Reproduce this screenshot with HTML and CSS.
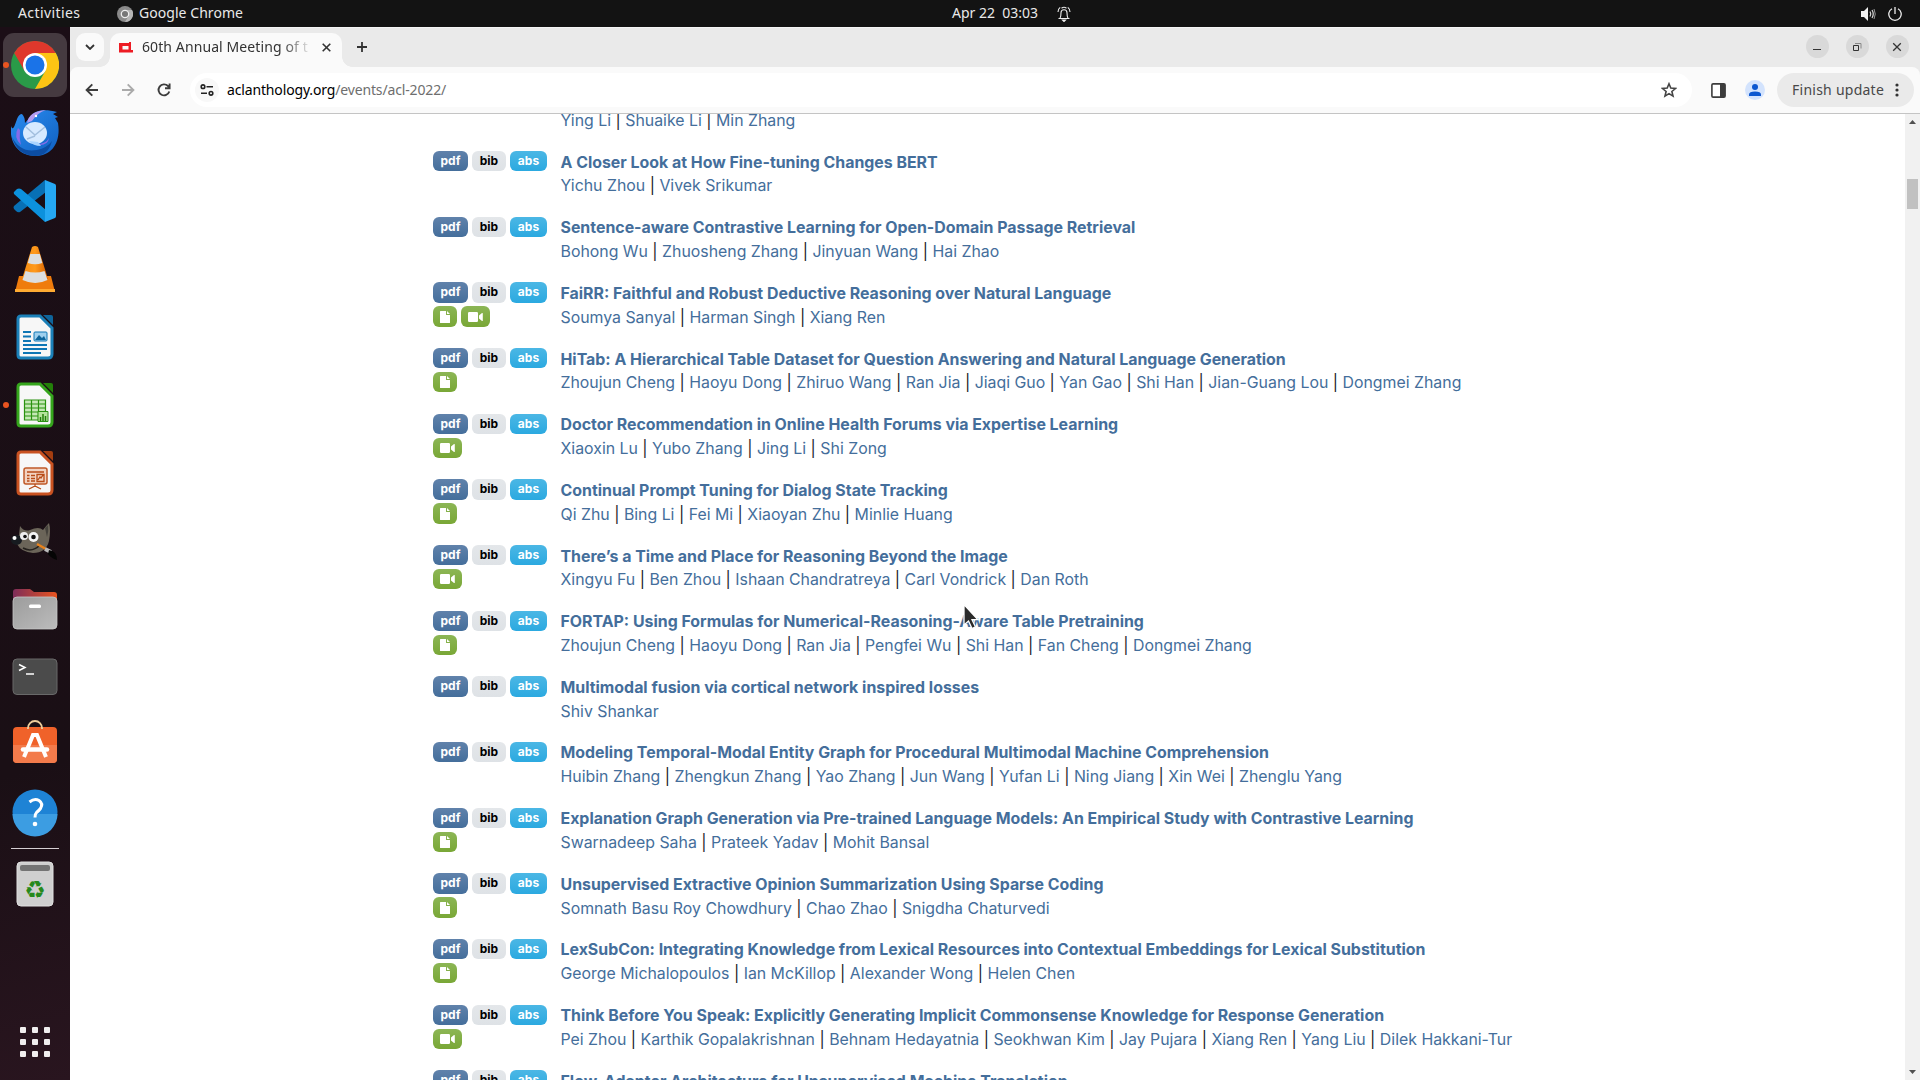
FILE: index.html
```html
<!DOCTYPE html>
<html lang="en">
<head>
    <meta charset="UTF-8">
    <title>60th Annual Meeting of the Association for Computational Linguistics</title>
    <link rel="stylesheet" href="styles.css">
</head>
<body>
<svg class="defs">
    <symbol id="doc" viewBox="0 0 10 12"><path fill="#fff" d="M0 .6Q0 0 .6 0H6v3.4q0 .6.6.6H10v7.4q0 .6-.6.6H.6Q0 12 0 11.4zM7 0l3 3H7z"/></symbol>
    <symbol id="video" viewBox="0 0 15 10"><path fill="#fff" d="M0 1.2Q0 0 1.2 0h7.6Q10 0 10 1.2v7.6Q10 10 8.8 10H1.2Q0 10 0 8.8zM11 3.4 14 1q.8-.4.8.5v7q0 .9-.8.5l-3-2.400z"/></symbol>
    <linearGradient id="blueball" x1="0" y1="0" x2="1" y2="1"><stop offset="0" stop-color="#2b8df0"/><stop offset="1" stop-color="#0f5fc0"/></linearGradient>
    <linearGradient id="grey" x1="0" y1="0" x2="1" y2="1"><stop offset="0" stop-color="#9c9c9c"/><stop offset="1" stop-color="#bcbcbc"/></linearGradient>
    <linearGradient id="folder"><stop offset="0" stop-color="#7d2d59"/><stop offset="1" stop-color="#e95420"/></linearGradient>
    <linearGradient id="cone"><stop offset="0" stop-color="#f58a10"/><stop offset=".5" stop-color="#ff9a1c"/><stop offset="1" stop-color="#d65f00"/></linearGradient>
</svg>

<header class="topbar">
    <span class="activities">Activities</span>
    <svg class="app-icon" width="16" height="16" viewBox="0 0 16 16"><circle cx="8" cy="8" r="8" fill="#8a8a8a"/><path d="M8 4h7A8 8 0 0 1 8 16l3.500-6z" fill="#b5b5b5"/><circle cx="8" cy="8" r="3.700" fill="#777" stroke="#eee" stroke-width="1.300"/></svg>
    <span class="app-name">Google Chrome</span>
    <div class="clock">
        <span>Apr 22&nbsp; 03:03</span>
        <svg width="14" height="16" viewBox="0 0 14 16" fill="none" stroke="#eee" stroke-width="1.100"><path d="M1.500 12.500h11M3 12.300c1-1.300 1-3 1-5.500a3 3 0 0 1 6 0c0 2.500 0 4.200 1 5.500M1 6c0-2 .8-3.600 2.200-4.600M13 6c0-2-.8-3.600-2.200-4.600M4.500 2.300a4 4 0 0 1 5 0"/><path d="M5.500 14h3l-1.500 1.500z" fill="#eee"/></svg>
    </div>
    <div class="tray">
        <svg width="16" height="14" viewBox="0 0 16 14"><path d="M0 4h3l4-4v14l-4-4H0z" fill="#f2f2f2"/><path d="M9 4.500q1.600 2.500 0 5M11 3q2.500 4 0 8" fill="none" stroke="#ddd" stroke-width="1.200"/><path d="M13 2q2.500 5 0 10" fill="none" stroke="#999"/></svg>
        <svg width="14" height="14" viewBox="0 0 14 14" fill="none" stroke="#eee" stroke-width="1.300"><path d="M7 0v7M4 1.700a6.200 6.200 0 1 0 6 0"/></svg>
    </div>
</header>

<div class="desktop">
    <nav class="dock">
        <div class="dock-item active running">
            <svg width="48" height="48" viewBox="0 0 48 48"><circle cx="24" cy="24" r="24" fill="#2a9a48"/><path d="M3.200 12A24 24 0 0 1 44.800 12H24L13.600 30z" fill="#df382c"/><path d="M24 12h20.800A24 24 0 0 1 24 48l10.400-18z" fill="#fdc414"/><circle cx="24" cy="24" r="12" fill="#fff"/><circle cx="24" cy="24" r="9.500" fill="#1a73e8"/></svg>
        </div>
        <div class="dock-item">
            <svg width="48" height="48" viewBox="0 0 48 48"><path d="M0 17C2 23 4 16 6 10q2-5 5-5 3 3 3 9l6-7C24 1 34 0 46 3l-4 2 5 3-3 1 3 5C50 32 42 47 24 47 8 47-2 34 0 17z" fill="url(#blueball)"/><path d="M1 28q8 16 25 13 10-2 15-9-4 15-17 15Q6 46 1 28z" fill="#0c4da3"/><path d="M16 14q2-12 19-13-9 3-14 11z" fill="#b49cf0"/><path d="M7 19q-5 9 3 17-2-7-1-15zM26 35q9 0 12-6-1 7-9 7z" fill="#866ce8"/><ellipse cx="24" cy="24" rx="12" ry="11" fill="#d7eaff"/><path d="M18 32q4 5 12 5l-3-4z" fill="#a9d4ff"/><path d="M15 18l9 8 10-8M24 27l-8 3" fill="none" stroke="#a3bfde" stroke-width="1.500"/><circle cx="25" cy="7" r="1.200" fill="#fff"/></svg>
        </div>
        <div class="dock-item">
            <svg width="44" height="44" viewBox="0 0 44 44"><path d="M32 1 33 13 7 33q-2 1-4-1l-2-2q-1-2 0-3z" fill="#0870b5"/><path d="M1 15q-1-2 1-3l2-2q2-1 4 0l25 21-1 12z" fill="#0c91dd"/><path d="M32 1l10 4q1 .7 1 2v30q0 1.500-1 2l-10 4z" fill="#25a8f3"/></svg>
        </div>
        <div class="dock-item">
            <svg width="42" height="48" viewBox="0 0 42 48"><path d="M5 31h32l4 16H1z" fill="#ef7c0c"/><path d="M1 44h40v3H1z" fill="#ffab32"/><path d="M18 2q3-2 6 0l10 32q-13 8-26 0z" fill="url(#cone)"/><path d="M16.300 9h9.500l2.500 9q-7 2.500-14.500 0zM11.500 26q10 3 19 0l3 9q-12 6-25 0z" fill="#dcdedf"/></svg>
        </div>
        <div class="dock-item">
            <svg width="38" height="46" viewBox="0 0 38 46"><path d="M5 2h19l12 12v26q0 4-4 4H5q-3 0-3-3V5q0-3 3-3z" fill="#f7f7f7" stroke="#1b80b8" stroke-width="3"/><path d="M27 1h8q2 0 2 2v8z" fill="#0e659b"/><path d="M7 18h8M7 22.500h8M7 27h8M7 31h24M7 35h24M7 39h18" stroke="#0e76b5" stroke-width="2"/><rect x="18" y="18" width="13" height="9" rx="1" fill="#9fd0ee" stroke="#0e76b5"/><path d="M19 26l4-5 3 3 2-2 2 4z" fill="#0e659b"/></svg>
        </div>
        <div class="dock-item running">
            <svg width="38" height="46" viewBox="0 0 38 46"><path d="M5 2h19l12 12v26q0 4-4 4H5q-3 0-3-3V5q0-3 3-3z" fill="#f7f7f7" stroke="#35a51c" stroke-width="3"/><path d="M27 1h8q2 0 2 2v8z" fill="#238009"/><path d="M8.500 18h21v20h-21zM8.500 22h21M8.500 26h21M8.500 30h21M8.500 34h21M15.500 18v20M22.500 18v20" fill="#c5e8b6" stroke="#2a9210" stroke-width="1.200"/><path d="M22 29.500h10v10H22z" fill="#b5e39b" stroke="#2a9210"/><path d="M24.500 39v-4M27 39v-7M29.500 39v-5" stroke="#238009" stroke-width="1.500"/></svg>
        </div>
        <div class="dock-item">
            <svg width="38" height="46" viewBox="0 0 38 46"><path d="M5 2h19l12 12v26q0 4-4 4H5q-3 0-3-3V5q0-3 3-3z" fill="#f7f7f7" stroke="#c95221" stroke-width="3"/><path d="M27 1h8q2 0 2 2v8z" fill="#a33d10"/><rect x="8" y="18" width="23" height="16" rx="2" fill="#f3d3c1" stroke="#c05a28" stroke-width="1.500"/><path d="M11 22h17M11 25.500h2.500M11 28.500h2.500M11 31h2.500M15 25.500h4M15 28.500h4M15 31h4" stroke="#b84b17" stroke-width="1.500"/><path d="M21 24.500h7v7h-7zM22 30l2-3 1 1 2-3M19 34v3M13 39l6-3 6 3" fill="none" stroke="#b84b17" stroke-width="1.300"/></svg>
        </div>
        <div class="dock-item">
            <svg width="48" height="48" viewBox="0 3 48 48"><path d="M9 12q4 6 10 4 9-4 13 0 3-4 6-7 2 7 0 18-3 12-16 12Q10 38 6 30 3 25 8 21z" fill="#6b6559"/><path d="M34 14l3-3q1 6-1 12z" fill="#45423c"/><ellipse cx="5.500" cy="26" rx="5.500" ry="5" fill="#171b20"/><circle cx="3.500" cy="24" r="2" fill="#fff"/><circle cx="13" cy="22" r="4" fill="#eee"/><circle cx="14" cy="22.500" r="1.800" fill="#111"/><circle cx="22.500" cy="23" r="5" fill="#f5f5f5"/><circle cx="22.500" cy="23" r="2.300" fill="#111"/><path d="M12 34q9 5 17-3" fill="none" stroke="#25221e" stroke-width="1.500"/><path d="M26 30l9 5" stroke="#e8821c" stroke-width="2.500"/><path d="M34 35l6 3" stroke="#bbb" stroke-width="4"/><path d="M38 36q8 1 8 10-6-2-9-6z" fill="#050505"/></svg>
        </div>
        <div class="dock-item">
            <svg width="46" height="42" viewBox="0 0 46 42"><path d="M1 4q0-3 3-3h14l4 3h20q3 0 3 3v14H1z" fill="url(#folder)"/><rect x="1" y="9" width="44" height="32" rx="4" fill="url(#grey)" stroke="#c7c7c7" stroke-width=".8"/><rect x="17" y="16.500" width="12" height="3.500" rx="1.500" fill="#fff"/></svg>
        </div>
        <div class="dock-item">
            <svg width="46" height="38" viewBox="0 0 46 38"><rect x="1" y="1" width="44" height="35.500" rx="4" fill="#4b4b4b" stroke="#696969"/><path d="M7 6.500l6 3-6 3" fill="none" stroke="#fff" stroke-width="1.500"/><path d="M14 16h8" stroke="#fff" stroke-width="1.500"/></svg>
        </div>
        <div class="dock-item">
            <svg width="46" height="50" viewBox="0 0 46 50"><rect x="1" y="7" width="44" height="36" rx="4" fill="#f0622a"/><path d="M1 25h44v14q0 4-4 4H5q-4 0-4-4z" fill="#f37b4b"/><path d="M16 9v-1a7 7 0 0 1 14 0v1" fill="none" stroke="#efce9c" stroke-width="1.800"/><path d="M12 37l9-22h4l9 22" fill="none" stroke="#fff" stroke-width="4"/><path d="M11 29.500h24" stroke="#fff" stroke-width="4.500" stroke-linecap="round"/></svg>
        </div>
        <div class="dock-item">
            <svg width="46" height="48" viewBox="0 0 46 48"><circle cx="23" cy="23" r="22.500" fill="#1e83d5"/><path d="M.5 25h45a22.500 22.500 0 0 1-45 0z" fill="#3c9de2"/><path d="M17.500 13q5-4 9.500-1.500 4.500 3 1.500 8-1.500 2-4 4-1.500 1.500-1.500 5" fill="none" stroke="#fff" stroke-width="3"/><circle cx="23" cy="35" r="2.300" fill="#fff"/></svg>
        </div>
        <div class="dock-line"></div>
        <div class="dock-item trash">
            <svg width="38" height="46" viewBox="0 0 38 46"><rect x="1" y="1" width="36" height="44" rx="4" fill="#cfcfcf" stroke="#e0e0e0"/><rect x="4" y="4" width="30" height="6" rx="2" fill="#747474"/><text x="19" y="37" class="recycle">♻</text></svg>
        </div>
        <div class="apps"><i></i><i></i><i></i><i></i><i></i><i></i><i></i><i></i><i></i></div>
    </nav>

    <main class="window">
        <div class="tabstrip">
            <div class="tab-search"><svg width="10" height="6" viewBox="0 0 10 6"><path d="M1 1l4 4 4-4" fill="none" stroke="#333" stroke-width="1.800"/></svg></div>
            <div class="tab">
                <svg width="14" height="11" viewBox="0 0 14 11"><path fill="#ed1c24" fill-rule="evenodd" d="M0 1h10V0h2v8h2v2.500H0zM3.500 4v3.500h6V4z"/></svg>
                <span class="tab-title">60th Annual Meeting of t</span>
                <svg width="9" height="9" viewBox="0 0 9 9"><path d="M.7.7l7.600 7.600M8.300.7.7 8.300" stroke="#333" stroke-width="1.600"/></svg>
            </div>
            <svg class="new-tab" width="12" height="12" viewBox="0 0 12 12"><path d="M6 1v10M1 6h10" stroke="#333" stroke-width="1.800"/></svg>
            <div class="win-buttons">
                <span><svg width="10" height="10" viewBox="0 0 10 10"><path d="M1 7.500h8" stroke="#333"/></svg></span>
                <span><svg width="10" height="10" viewBox="0 0 10 10" fill="none"><path d="M3 1.500h6v5" stroke="#888"/><path d="M1.500 3.500h5v5h-5z" stroke="#333"/></svg></span>
                <span><svg width="10" height="10" viewBox="0 0 10 10"><path d="M1.200 1.200l7.600 7.600M8.800 1.200 1.200 8.800" stroke="#333" stroke-width="1.300"/></svg></span>
            </div>
        </div>
        <div class="toolbar">
            <svg width="14" height="14" viewBox="0 0 14 14" fill="none" stroke="#3c3c3c" stroke-width="1.900"><path d="M13 7H2M7.300 1.300 1.600 7l5.700 5.700"/></svg>
            <svg width="14" height="14" viewBox="0 0 14 14" fill="none" stroke="#aaa" stroke-width="1.900"><path d="M1 7h11M6.700 1.300 12.400 7l-5.700 5.700"/></svg>
            <svg width="14" height="14" viewBox="0 0 14 14" fill="none" stroke="#3c3c3c" stroke-width="1.900"><path d="M12.300 8.500A5.500 5.500 0 1 1 11 3l1.500 1.500M12.600.5v4.700H8"/></svg>
            <div class="omnibox">
                <span class="site-info"><svg width="14" height="12" viewBox="0 0 14 12" fill="none" stroke="#222" stroke-width="1.600"><circle cx="3" cy="2.700" r="1.800"/><path d="M6.500 2.700H13M1 9.300h6"/><circle cx="11" cy="9.300" r="1.800"/></svg></span>
                <span class="url">aclanthology.org<em>/events/acl-2022/</em></span>
                <svg width="16" height="16" viewBox="0 0 16 16"><path d="M8 1.800l1.800 4.300 4.700.4-3.600 3 1.100 4.600L8 11.600l-4 2.500 1.100-4.600-3.600-3 4.700-.4z" fill="none" stroke="#444" stroke-width="1.600"/></svg>
            </div>
            <svg class="panel" width="15" height="15" viewBox="0 0 15 15"><rect x=".9" y=".9" width="13.200" height="13.200" rx="1.200" fill="#fff" stroke="#3c3c3c" stroke-width="1.600"/><path d="M9 1h5v13H9z" fill="#3c3c3c"/></svg>
            <svg class="avatar" width="20" height="20" viewBox="0 0 20 20"><circle cx="10" cy="10" r="10" fill="#d3e3fd"/><circle cx="10" cy="7" r="3" fill="#0b57d0"/><path d="M4 16v-1.500q0-3 6-3t6 3V16z" fill="#0b57d0"/></svg>
            <div class="update"><span>Finish update</span><svg width="4" height="14" viewBox="0 0 4 14" fill="#333"><circle cx="2" cy="2" r="1.600"/><circle cx="2" cy="7" r="1.600"/><circle cx="2" cy="12" r="1.600"/></svg></div>
        </div>

        <div class="page">
            <div class="papers">
                <div class="paper">
                    <div class="buttons"></div>
                    <div class="info"><b>&nbsp;</b><p><a>Ying Li</a> | <a>Shuaike Li</a> | <a>Min Zhang</a></p></div>
                </div>
                <div class="paper">
                    <div class="buttons"><span class="pdf">pdf</span><span class="bib">bib</span><span class="abs">abs</span></div>
                    <div class="info"><b>A Closer Look at How Fine-tuning Changes BERT</b><p><a>Yichu Zhou</a> | <a>Vivek Srikumar</a></p></div>
                </div>
                <div class="paper">
                    <div class="buttons"><span class="pdf">pdf</span><span class="bib">bib</span><span class="abs">abs</span></div>
                    <div class="info"><b>Sentence-aware Contrastive Learning for Open-Domain Passage Retrieval</b><p><a>Bohong Wu</a> | <a>Zhuosheng Zhang</a> | <a>Jinyuan Wang</a> | <a>Hai Zhao</a></p></div>
                </div>
                <div class="paper">
                    <div class="buttons"><span class="pdf">pdf</span><span class="bib">bib</span><span class="abs">abs</span><span class="att doc"><svg><use href="#doc"/></svg></span><span class="att video"><svg><use href="#video"/></svg></span></div>
                    <div class="info"><b>FaiRR: Faithful and Robust Deductive Reasoning over Natural Language</b><p><a>Soumya Sanyal</a> | <a>Harman Singh</a> | <a>Xiang Ren</a></p></div>
                </div>
                <div class="paper">
                    <div class="buttons"><span class="pdf">pdf</span><span class="bib">bib</span><span class="abs">abs</span><span class="att doc"><svg><use href="#doc"/></svg></span></div>
                    <div class="info"><b>HiTab: A Hierarchical Table Dataset for Question Answering and Natural Language Generation</b><p><a>Zhoujun Cheng</a> | <a>Haoyu Dong</a> | <a>Zhiruo Wang</a> | <a>Ran Jia</a> | <a>Jiaqi Guo</a> | <a>Yan Gao</a> | <a>Shi Han</a> | <a>Jian-Guang Lou</a> | <a>Dongmei Zhang</a></p></div>
                </div>
                <div class="paper">
                    <div class="buttons"><span class="pdf">pdf</span><span class="bib">bib</span><span class="abs">abs</span><span class="att video"><svg><use href="#video"/></svg></span></div>
                    <div class="info"><b>Doctor Recommendation in Online Health Forums via Expertise Learning</b><p><a>Xiaoxin Lu</a> | <a>Yubo Zhang</a> | <a>Jing Li</a> | <a>Shi Zong</a></p></div>
                </div>
                <div class="paper">
                    <div class="buttons"><span class="pdf">pdf</span><span class="bib">bib</span><span class="abs">abs</span><span class="att doc"><svg><use href="#doc"/></svg></span></div>
                    <div class="info"><b>Continual Prompt Tuning for Dialog State Tracking</b><p><a>Qi Zhu</a> | <a>Bing Li</a> | <a>Fei Mi</a> | <a>Xiaoyan Zhu</a> | <a>Minlie Huang</a></p></div>
                </div>
                <div class="paper">
                    <div class="buttons"><span class="pdf">pdf</span><span class="bib">bib</span><span class="abs">abs</span><span class="att video"><svg><use href="#video"/></svg></span></div>
                    <div class="info"><b>There’s a Time and Place for Reasoning Beyond the Image</b><p><a>Xingyu Fu</a> | <a>Ben Zhou</a> | <a>Ishaan Chandratreya</a> | <a>Carl Vondrick</a> | <a>Dan Roth</a></p></div>
                </div>
                <div class="paper">
                    <div class="buttons"><span class="pdf">pdf</span><span class="bib">bib</span><span class="abs">abs</span><span class="att doc"><svg><use href="#doc"/></svg></span></div>
                    <div class="info"><b>FORTAP: Using Formulas for Numerical-Reasoning-Aware Table Pretraining</b><p><a>Zhoujun Cheng</a> | <a>Haoyu Dong</a> | <a>Ran Jia</a> | <a>Pengfei Wu</a> | <a>Shi Han</a> | <a>Fan Cheng</a> | <a>Dongmei Zhang</a></p></div>
                </div>
                <div class="paper">
                    <div class="buttons"><span class="pdf">pdf</span><span class="bib">bib</span><span class="abs">abs</span></div>
                    <div class="info"><b>Multimodal fusion via cortical network inspired losses</b><p><a>Shiv Shankar</a></p></div>
                </div>
                <div class="paper">
                    <div class="buttons"><span class="pdf">pdf</span><span class="bib">bib</span><span class="abs">abs</span></div>
                    <div class="info"><b>Modeling Temporal-Modal Entity Graph for Procedural Multimodal Machine Comprehension</b><p><a>Huibin Zhang</a> | <a>Zhengkun Zhang</a> | <a>Yao Zhang</a> | <a>Jun Wang</a> | <a>Yufan Li</a> | <a>Ning Jiang</a> | <a>Xin Wei</a> | <a>Zhenglu Yang</a></p></div>
                </div>
                <div class="paper">
                    <div class="buttons"><span class="pdf">pdf</span><span class="bib">bib</span><span class="abs">abs</span><span class="att doc"><svg><use href="#doc"/></svg></span></div>
                    <div class="info"><b>Explanation Graph Generation via Pre-trained Language Models: An Empirical Study with Contrastive Learning</b><p><a>Swarnadeep Saha</a> | <a>Prateek Yadav</a> | <a>Mohit Bansal</a></p></div>
                </div>
                <div class="paper">
                    <div class="buttons"><span class="pdf">pdf</span><span class="bib">bib</span><span class="abs">abs</span><span class="att doc"><svg><use href="#doc"/></svg></span></div>
                    <div class="info"><b>Unsupervised Extractive Opinion Summarization Using Sparse Coding</b><p><a>Somnath Basu Roy Chowdhury</a> | <a>Chao Zhao</a> | <a>Snigdha Chaturvedi</a></p></div>
                </div>
                <div class="paper">
                    <div class="buttons"><span class="pdf">pdf</span><span class="bib">bib</span><span class="abs">abs</span><span class="att doc"><svg><use href="#doc"/></svg></span></div>
                    <div class="info"><b>LexSubCon: Integrating Knowledge from Lexical Resources into Contextual Embeddings for Lexical Substitution</b><p><a>George Michalopoulos</a> | <a>Ian McKillop</a> | <a>Alexander Wong</a> | <a>Helen Chen</a></p></div>
                </div>
                <div class="paper">
                    <div class="buttons"><span class="pdf">pdf</span><span class="bib">bib</span><span class="abs">abs</span><span class="att video"><svg><use href="#video"/></svg></span></div>
                    <div class="info"><b>Think Before You Speak: Explicitly Generating Implicit Commonsense Knowledge for Response Generation</b><p><a>Pei Zhou</a> | <a>Karthik Gopalakrishnan</a> | <a>Behnam Hedayatnia</a> | <a>Seokhwan Kim</a> | <a>Jay Pujara</a> | <a>Xiang Ren</a> | <a>Yang Liu</a> | <a>Dilek Hakkani-Tur</a></p></div>
                </div>
                <div class="paper">
                    <div class="buttons"><span class="pdf">pdf</span><span class="bib">bib</span><span class="abs">abs</span></div>
                    <div class="info"><b>Flow-Adapter Architecture for Unsupervised Machine Translation</b></div>
                </div>
            </div>
            <div class="scrollbar">
                <svg width="7" height="4" viewBox="0 0 7 4"><path d="M0 4l3.500-4L7 4z" fill="#505050"/></svg>
                <div class="thumb"></div>
                <svg width="7" height="4" viewBox="0 0 7 4"><path d="M0 0l3.500 4L7 0z" fill="#505050"/></svg>
            </div>
        </div>
    </main>
</div>
<svg class="cursor" width="18" height="28" viewBox="0 0 18 28"><path d="M1 1.500v20.500l4.500-4 3.500 7.500 3.500-1.600-3.500-7.200h6z" fill="#2b2b2b" stroke="#fff" stroke-width="1.300"/></svg>
</body>
</html>
```
FILE: styles.css
```css
* {
    box-sizing: border-box;
}
body {
    margin: 0;
    height: 1080px;
    overflow: hidden;
    display: flex;
    flex-direction: column;
    font-family: "Noto Sans", sans-serif;
    font-size: 14px;
    background: #1c1017;
}
svg {
    display: block;
    flex: none;
}
.defs {
    position: absolute;
    width: 0;
    height: 0;
}

/* GNOME top bar */
.topbar {
    position: relative;
    display: flex;
    align-items: center;
    flex: none;
    height: 27px;
    padding: 0 18px 0 18px;
    background: #131313;
    color: #e9e9e9;
    font-size: 14px;
    line-height: 24px;
    white-space: nowrap;
}
.topbar span {
    margin-top: -1px;
}
.activities {
    width: 99px;
    letter-spacing: 0.4px;
}
.app-name {
    margin-left: 6px;
    letter-spacing: 0.05px;
}
.clock {
    position: absolute;
    left: 952px;
    display: flex;
    align-items: center;
    gap: 19px;
}
.clock span {
    width: 86px;
}
.tray {
    display: flex;
    align-items: center;
    gap: 11px;
    margin-left: auto;
}

/* dock */
.desktop {
    display: flex;
    flex: 1;
    min-height: 0;
}
.dock {
    display: flex;
    flex-direction: column;
    align-items: center;
    gap: 4px;
    width: 70px;
    padding-top: 6px;
    background: linear-gradient(165deg, #1b0e16 0%, #1a0f15 70%, #29151f 100%);
}
.dock-item {
    position: relative;
    display: flex;
    align-items: center;
    justify-content: center;
    flex: none;
    width: 64px;
    height: 64px;
    border-radius: 11px;
}
.dock-item.active {
    background: #453a40;
}
.running::before {
    content: "";
    position: absolute;
    left: 0;
    top: 29px;
    width: 6px;
    height: 6px;
    border-radius: 50%;
    background: #e95420;
}
.dock-line {
    width: 48px;
    height: 1px;
    margin-top: -1px;
    background: #d5cfd3;
}
.trash {
    margin-top: -1px;
}
.recycle {
    font: 24px "DejaVu Sans", sans-serif;
    fill: #26891c;
    text-anchor: middle;
}
.apps {
    display: grid;
    grid-template-columns: repeat(3, 6px);
    gap: 6px;
    margin-top: auto;
    margin-bottom: 23px;
}
.apps i {
    width: 6px;
    height: 6px;
    border-radius: 1px;
    background: #f0eeee;
}

/* browser window */
.window {
    display: flex;
    flex-direction: column;
    flex: 1;
    min-width: 0;
    background: #eaeaea;
}
.tabstrip {
    display: flex;
    flex: none;
    height: 40px;
    padding: 5px 11.5px 0 6px;
    border-top: 1px solid #f4f4f4;
}
.tab-search {
    display: flex;
    align-items: center;
    justify-content: center;
    width: 28px;
    height: 28px;
    border-radius: 9px;
    background: #fafafa;
}
.tab {
    position: relative;
    display: flex;
    align-items: center;
    width: 232px;
    height: 34px;
    margin-left: 6px;
    padding: 0 11px 6px 9px;
    border-radius: 10px 10px 0 0;
    background: #fafafa;
}
.tab::before,
.tab::after {
    content: "";
    position: absolute;
    bottom: 0;
    width: 10px;
    height: 10px;
}
.tab::before {
    left: -10px;
    background: radial-gradient(circle at 0 0, transparent 9.5px, #fafafa 10px);
}
.tab::after {
    right: -10px;
    background: radial-gradient(circle at 100% 0, transparent 9.5px, #fafafa 10px);
}
.tab-title {
    width: 170px;
    margin: -2px 10px 0 9px;
    white-space: nowrap;
    color: #333;
    letter-spacing: 0.1px;
    -webkit-mask-image: linear-gradient(90deg, #000 140px, transparent 170px);
    mask-image: linear-gradient(90deg, #000 140px, transparent 170px);
}
.new-tab {
    margin: 8px 0 0 14px;
}
.win-buttons {
    display: flex;
    gap: 17px;
    margin: 2px 0 0 auto;
}
.win-buttons span {
    display: flex;
    align-items: center;
    justify-content: center;
    width: 23px;
    height: 23px;
    border-radius: 50%;
    background: #d9d9d9;
}
.toolbar {
    display: flex;
    align-items: center;
    flex: none;
    gap: 22px;
    height: 47px;
    padding: 0 6px 0 15px;
    border-bottom: 1px solid #c4c4c4;
    border-radius: 8px 8px 0 0;
    background: #fafafa;
}
.omnibox {
    display: flex;
    align-items: center;
    flex: 1;
    height: 34px;
    margin-left: -3px;
    padding: 0 15px 0 5px;
    border-radius: 17px;
    background: #fff;
}
.site-info {
    display: flex;
    align-items: center;
    justify-content: center;
    width: 24px;
    height: 24px;
    border-radius: 50%;
    background: #f8f8f8;
}
.url {
    flex: 1;
    margin: -2px 0 0 8px;
    color: #000;
    letter-spacing: -0.15px;
}
.url em {
    font-style: normal;
    color: #6e6e6e;
}
.panel {
    margin-left: -3px;
}
.avatar {
    margin-left: -3px;
}
.update {
    display: flex;
    align-items: center;
    justify-content: space-between;
    width: 137px;
    height: 34px;
    margin-left: -10px;
    padding: 0 15px;
    border-radius: 17px;
    background: #eaeaea;
    color: #484848;
    white-space: nowrap;
}
.update span {
    margin-top: -2px;
    letter-spacing: 0.25px;
}

/* page */
.page {
    display: flex;
    flex: 1;
    min-height: 0;
    overflow: hidden;
    background: #fff;
}
.papers {
    flex: 1;
    margin-top: -28.5px;
    padding-left: 363px;
    font-family: Inter, sans-serif;
    font-size: 15.87px;
    line-height: 23.82px;
}
.paper {
    display: flex;
    height: 65.67px;
}
.buttons {
    display: flex;
    flex-wrap: wrap;
    align-content: flex-start;
    gap: 3.7px 4px;
    width: 127.5px;
}
.buttons span {
    height: 20.3px;
    border-radius: 6px;
    font-size: 12px;
    font-weight: 700;
    line-height: 20px;
    text-align: center;
    color: #fff;
}
.buttons .pdf {
    width: 35px;
    background: linear-gradient(180deg, #6082ab, #446e9b);
}
.buttons .bib {
    width: 34px;
    background: linear-gradient(180deg, #e4e7ea, #dee2e6);
    color: #000;
}
.buttons .abs {
    width: 37px;
    background: linear-gradient(180deg, #4bb7e5, #2ba9e0);
}
.buttons .att {
    display: flex;
    align-items: center;
    justify-content: center;
    background: linear-gradient(180deg, #8cb655, #79a736);
}
.buttons .doc {
    width: 24px;
}
.buttons .video {
    width: 29px;
}
.doc svg {
    width: 10px;
    height: 12px;
}
.video svg {
    width: 15px;
    height: 10px;
}
.info {
    margin-top: -0.6px;
    white-space: nowrap;
    color: #212529;
}
.info b {
    display: block;
    font-size: 15.9px;
    font-weight: 700;
    color: #446e9b;
}
.info p {
    margin: 0;
}
.info a {
    color: #446e9b;
}
.scrollbar {
    display: flex;
    flex-direction: column;
    align-items: center;
    width: 15px;
    padding: 6px 0;
    background: #f1f1f1;
}
.thumb {
    width: 11px;
    height: 30px;
    margin: 55px 0 auto;
    background: #c1c1c1;
}

.cursor {
    position: absolute;
    left: 963px;
    top: 603px;
}
```
